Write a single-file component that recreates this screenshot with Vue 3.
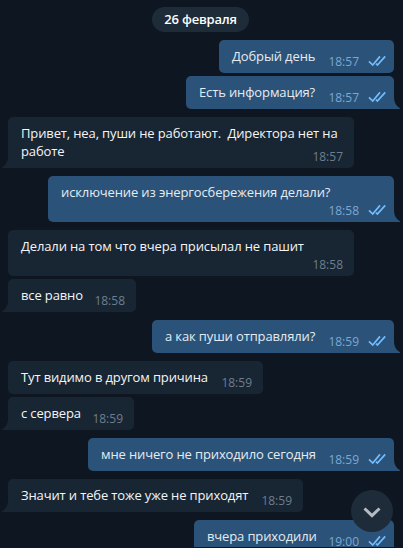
<template>
  <div class="chat">
    <div class="date">26 февраля</div>

    <div
      v-for="msg in messages"
      :key="msg.id"
      class="row"
      :class="{ out: msg.out, last: msg.tail }"
    >
      <div class="bubble" :class="{ tall: msg.tall }" :style="{ width: msg.width + 'px' }">
        <span class="text">
          <span v-for="line in msg.lines" :key="line" class="line">{{ line }}</span>
        </span>
        <span class="meta">
          <span class="time">{{ msg.time }}</span>
          <svg v-if="msg.out" class="ticks" width="19" height="12" viewBox="0 0 19 12">
            <path d="M1 6.4 L4.7 10 L12 1.4 M8 8.6 L9.4 10 L17.2 1.4" />
          </svg>
        </span>
        <svg v-if="msg.tail" class="tail" width="6" height="12" viewBox="0 0 6 12">
          <path d="M0 0 C0 5 2 9 6 11.2 V12 H0 Z" />
        </svg>
      </div>
    </div>

    <button class="scroll-down" aria-label="Вниз">
      <svg width="20" height="14" viewBox="0 0 20 14">
        <path d="M2.5 2.5 L10 9.7 L17.5 2.5" />
      </svg>
    </button>
  </div>
</template>

<script setup>
const messages = [
  { id: 1, out: true, lines: ['Добрый день'], time: '18:57', width: 175 },
  { id: 2, out: true, lines: ['Есть информация?'], time: '18:57', width: 208, tail: true },
  { id: 3, lines: ['Привет, неа, пуши не работают.  Директора нет на', 'работе'], time: '18:57', width: 346, tail: true },
  { id: 4, out: true, lines: ['исключение из энергосбережения делали?'], time: '18:58', width: 346, tall: true, tail: true },
  { id: 5, lines: ['Делали на том что вчера присылал не пашит'], time: '18:58', width: 346, tall: true },
  { id: 6, lines: ['все равно'], time: '18:58', width: 128, tail: true },
  { id: 7, out: true, lines: ['а как пуши отправляли?'], time: '18:59', width: 242, tail: true },
  { id: 8, lines: ['Тут видимо в другом причина'], time: '18:59', width: 255 },
  { id: 9, lines: ['с сервера'], time: '18:59', width: 126, tail: true },
  { id: 10, out: true, lines: ['мне ничего не приходило сегодня'], time: '18:59', width: 306, tail: true },
  { id: 11, lines: ['Значит и тебе тоже уже не приходят'], time: '18:59', width: 295, tail: true },
  { id: 12, out: true, lines: ['вчера приходили'], time: '19:00', width: 200 },
]
</script>

<style>
body { background: #0e1621; }
</style>

<style scoped>
.chat {
  position: relative;
  display: flex;
  flex-direction: column;
  box-sizing: border-box;
  height: 548px;
  padding: 7px 9px 0 8px;
  overflow: hidden;
  background: #0e1621;
  border-bottom: 1px solid #0e1621;
  font-family: "Open Sans", "Noto Sans", sans-serif;
  font-size: 13px;
  line-height: 18px;
}

.date {
  flex: none;
  align-self: center;
  box-sizing: border-box;
  width: 97px;
  height: 25px;
  margin: 0 1px 8px 0;
  border-radius: 13px;
  background: #1e2c3a;
  color: #fff;
  font-weight: 600;
  line-height: 25px;
  letter-spacing: -0.2px;
  text-align: center;
}

.row {
  display: flex;
  flex: none;
  margin-bottom: 3px;
}
.row.out { justify-content: flex-end; }
.row.last { margin-bottom: 8px; }

.bubble {
  position: relative;
  display: grid;
  box-sizing: border-box;
  min-height: 33px;
  padding: 7px 8px 8px 13px;
  border-radius: 5px;
  background: #182533;
  color: #f5f5f5;
}
.bubble.tall { min-height: 46px; }
.out .bubble {
  background: #2b5278;
  color: #e4ecf2;
}
.last .bubble { border-bottom-left-radius: 0; }
.out.last .bubble {
  border-bottom-left-radius: 5px;
  border-bottom-right-radius: 0;
}

.text {
  display: flex;
  flex-direction: column;
  align-items: flex-start;
  grid-area: 1 / 1;
  letter-spacing: -0.13px;
}
.line { white-space: pre; }

.meta {
  display: flex;
  grid-area: 1 / 1;
  align-self: end;
  justify-self: end;
  align-items: center;
  gap: 9px;
  height: 18px;
  margin: 0 3px -6px 0;
}
.out .meta { margin-right: -1px; }
.time {
  color: #6d7f8f;
  font-size: 12px;
}
.out .time { color: #7da8d3; }

.ticks { margin-bottom: 2px; }
.ticks path {
  fill: none;
  stroke: #72bcfd;
  stroke-width: 1.7;
}

.tail {
  position: absolute;
  bottom: 0;
  left: -6px;
  transform: scaleX(-1);
  fill: #182533;
}
.out .tail {
  right: -6px;
  left: auto;
  transform: none;
  fill: #2b5278;
}

.scroll-down {
  position: absolute;
  top: 490px;
  left: 351px;
  display: flex;
  align-items: center;
  justify-content: center;
  width: 42px;
  height: 42px;
  padding: 4px 0 0;
  border: 0;
  border-radius: 50%;
  background: #1e2c3a;
}
.scroll-down path {
  fill: none;
  stroke: #b5bbc2;
  stroke-width: 3;
}
</style>
